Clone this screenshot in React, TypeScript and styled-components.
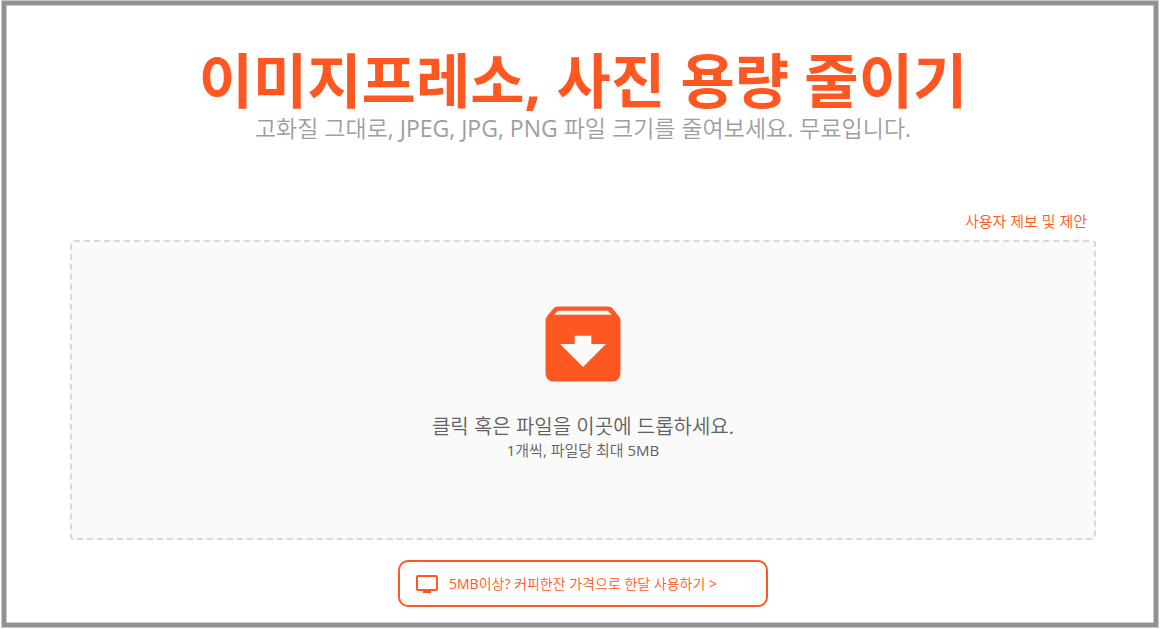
import React from 'react';
import styled, { createGlobalStyle } from 'styled-components';
import { MdArchive, MdTv } from 'react-icons/md';

const ACCENT = '#ff5722';

const GlobalStyle = createGlobalStyle`
  * { box-sizing: border-box; }
  body {
    margin: 0;
    background: #fff;
    font-family: "Open Sans", "Noto Sans CJK KR DemiLight", "Noto Sans CJK KR", sans-serif;
  }
`;

const Frame = styled.div`
  margin: 0 1px 2px;
  border: 1px solid #c8c9c8;
`;

const FrameInner = styled.div`
  border: 4px solid #919191;
`;

const Page = styled.main`
  border: 1px solid #c8c9c8;
  padding: 40px 57px 15px 63px;
  display: flex;
  flex-direction: column;
`;

const Header = styled.header`
  text-align: center;
`;

const Title = styled.h1`
  margin: 0;
  font-family: "Open Sans", "Noto Sans CJK KR", sans-serif;
  font-size: 59px;
  line-height: 68px;
  font-weight: 700;
  color: ${ACCENT};
`;

const Subtitle = styled.p`
  margin: 0;
  font-size: 23px;
  line-height: 28px;
  color: #9e9e9e;
`;

const Feedback = styled.a`
  align-self: flex-end;
  margin: 69px 9px 9px 0;
  font-size: 15px;
  line-height: 20px;
  color: ${ACCENT};
  text-decoration: none;
`;

const DropZone = styled.button`
  width: 100%;
  height: 300px;
  padding: 0 0 26px;
  border: 2px dashed #d9d9d9;
  border-radius: 4px;
  background: #fafafa;
  display: flex;
  flex-direction: column;
  align-items: center;
  justify-content: center;
  font-family: inherit;
  color: #616161;
  cursor: pointer;
`;

const ArchiveIcon = styled(MdArchive)`
  width: 100px;
  height: 100px;
  margin-bottom: 20px;
  color: ${ACCENT};
`;

const DropTitle = styled.span`
  font-size: 20px;
  line-height: 26px;
`;

const DropHint = styled.span`
  font-size: 15px;
  line-height: 20px;
`;

const Upgrade = styled.a`
  align-self: center;
  width: 370px;
  max-width: 100%;
  margin-top: 20px;
  padding: 10px 15px 9px;
  border: 2px solid ${ACCENT};
  border-radius: 10px;
  display: flex;
  align-items: center;
  gap: 10px;
  font-size: 14px;
  line-height: 24px;
  color: ${ACCENT};
  text-decoration: none;
`;

const App: React.FC = () => (
  <>
    <GlobalStyle />
    <Frame>
      <FrameInner>
        <Page lang="ko">
          <Header>
            <Title>이미지프레소, 사진 용량 줄이기</Title>
            <Subtitle>고화질 그대로, JPEG, JPG, PNG 파일 크기를 줄여보세요. 무료입니다.</Subtitle>
          </Header>
          <Feedback href="#feedback">사용자 제보 및 제안</Feedback>
          <DropZone type="button">
            <ArchiveIcon aria-hidden />
            <DropTitle>클릭 혹은 파일을 이곳에 드롭하세요.</DropTitle>
            <DropHint>1개씩, 파일당 최대 5MB</DropHint>
          </DropZone>
          <Upgrade href="#upgrade">
            <MdTv size={24} aria-hidden />
            <span>5MB이상? 커피한잔 가격으로 한달 사용하기 &gt;</span>
          </Upgrade>
        </Page>
      </FrameInner>
    </Frame>
  </>
);

export default App;
